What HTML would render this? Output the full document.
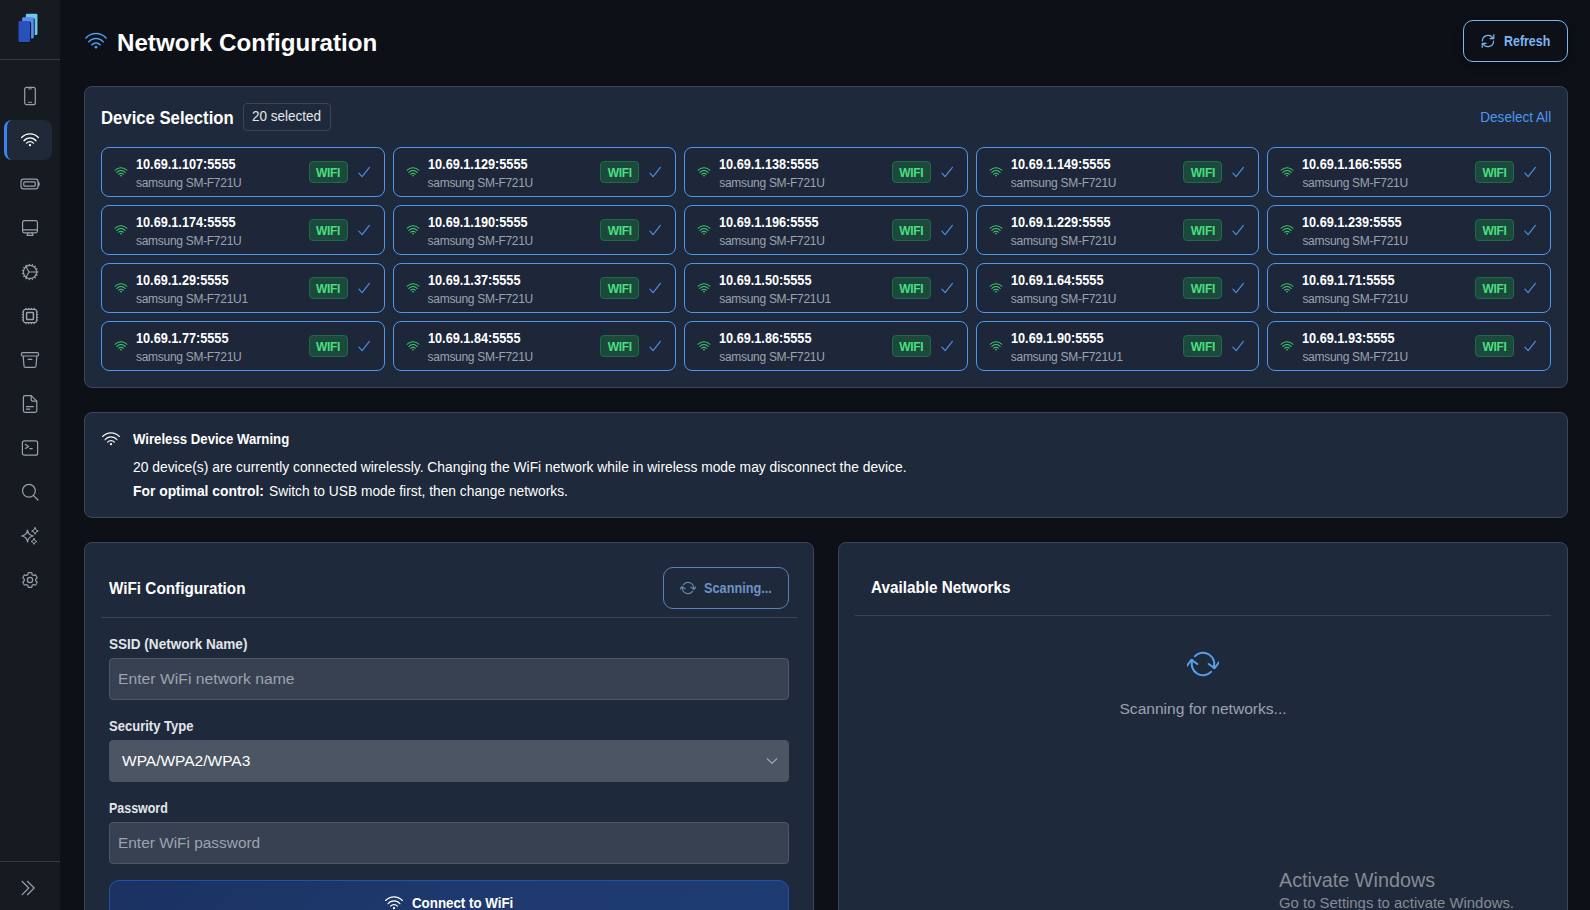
<!DOCTYPE html>
<html lang="en">
<head>
<meta charset="utf-8">
<title>Network Configuration</title>
<style>
*{box-sizing:border-box;margin:0;padding:0}
html,body{width:1590px;height:910px;overflow:hidden}
body{background:#0d1117;color:#fff;font-family:"Liberation Sans",sans-serif;position:relative}
.abs{position:absolute}
.t{position:absolute;white-space:nowrap;line-height:1}
b,.b{font-weight:700}
/* sidebar */
.sb{position:absolute;left:0;top:0;width:60px;height:910px;background:#161b22}
.sb .dv{position:absolute;left:0;width:60px;height:1px;background:#333a46}
.nv{position:absolute;left:4px;width:48px;height:40px;border-radius:8px;display:flex;align-items:center;justify-content:center;padding-left:4px}
.nv.act{background:#1f2937;border-left:3px solid #3b82f6;padding-left:1px}
/* panels */
.pn{position:absolute;background:#1e293b;border:1px solid #3a465a;border-radius:8px}
.grid{position:absolute;left:16px;top:60px;width:1450px;display:grid;grid-template-columns:repeat(5,1fr);gap:8px}
.card{height:50px;border:1px solid #4e97ee;border-radius:8px;background:#1d2739;display:flex;align-items:center;padding:0 12px}
.card .cw{flex:none;margin-right:8px}
.ct{flex:1;min-width:0;position:relative;top:1px}
.ip{font-weight:700;font-size:14px;line-height:16px;transform:scaleX(.907);transform-origin:0 50%;color:#fff;white-space:nowrap;margin-top:0}
.md{font-size:12px;line-height:14px;color:#9ca3af;white-space:nowrap;margin-top:4px;letter-spacing:-.29px}
.wb{flex:none;width:39px;height:22px;border:1px solid #1f6b48;background:#1b4a3d;border-radius:4px;color:#4ade80;font-weight:700;font-size:12px;line-height:20px;padding-top:1px;text-align:center;letter-spacing:-.3px;margin-right:8px}
.ck{flex:none}
.hl{position:absolute;height:1px;background:#374357}
.inp{position:absolute;left:24px;width:680px;height:42px;border-radius:4px;background:#374151;border:1px solid #4d5768;color:#9ca3af;font-size:15.5px;line-height:40px;padding-left:8.4px;white-space:nowrap}
.sel{background:#4b5563;border-color:#4b5563;color:#fff;padding-left:12px}
.lb{position:absolute;left:24px;font-weight:700;font-size:14px;line-height:20px;color:#e2e5ea;white-space:nowrap}
.btn{position:absolute;border-radius:10px;display:flex;align-items:center;font-weight:700;font-size:14px;white-space:nowrap}
.ti{position:absolute;left:84px;top:29px}
.wi{position:absolute;left:16px;top:16px}
.bs{position:absolute;left:348px;top:105px}
.ri,.si,.bi{flex:none}
.ib{display:inline-block}
#t5{transform-origin:100% 50% !important}
#t22{transform-origin:50% 50% !important}
#t1{transform:scaleX(1.0060);transform-origin:0 50%}
#t2{transform:scaleX(0.8880);transform-origin:0 50%}
#t3{transform:scaleX(0.9275);transform-origin:0 50%}
#t4{transform:scaleX(0.9650);transform-origin:0 50%}
#t5{transform:scaleX(0.9692);transform-origin:0 50%}
#t9{transform:scaleX(0.9417);transform-origin:0 50%}
#t10{transform:scaleX(0.9885);transform-origin:0 50%}
#t11b{transform:scaleX(0.9900);transform-origin:0 50%}
#t11r{transform:scaleX(0.9849);transform-origin:0 50%}
#t12{transform:scaleX(0.9672);transform-origin:0 50%}
#t13{transform:scaleX(0.9091);transform-origin:0 50%}
#t14{transform:scaleX(0.9668);transform-origin:0 50%}
#t15{transform:scaleX(1.0149);transform-origin:0 50%}
#t16{transform:scaleX(0.9308);transform-origin:0 50%}
#t17{transform:scaleX(0.9998);transform-origin:0 50%}
#t18{transform:scaleX(0.8890);transform-origin:0 50%}
#t19{transform:scaleX(0.9945);transform-origin:0 50%}
#t20{transform:scaleX(0.9519);transform-origin:0 50%}
#t21{transform:scaleX(0.9669);transform-origin:0 50%}
#t22{transform:scaleX(1.0049);transform-origin:0 50%}
#t23{transform:scaleX(0.9649);transform-origin:0 50%}
#t24{transform:scaleX(1.0267);transform-origin:0 50%}
</style>
</head>
<body>
<aside class="sb">
  <svg class="abs" style="left:0;top:0" width="60" height="59" viewBox="0 0 60 59">
    <rect x="26.6" y="14.6" width="11.8" height="21.2" rx="1.2" fill="#10141b"/>
    <rect x="25.8" y="13.7" width="11.7" height="21.2" rx="1.2" fill="#6fc6ea"/>
    <rect x="22.9" y="18.2" width="11.8" height="21.2" rx="1.2" fill="#10141b"/>
    <rect x="22.1" y="17.3" width="11.7" height="21.1" rx="1.2" fill="#5a8cf0"/>
    <rect x="19.3" y="21.8" width="11.8" height="21.2" rx="1.2" fill="#10141b"/>
    <rect x="18.5" y="20.9" width="11.7" height="21.1" rx="1.2" fill="#2851b9"/>
  </svg>
  <div class="dv" style="top:59px"></div>
  <div class="nv" style="top:76px"><svg width="20" height="20" viewBox="0 0 20 20" stroke="#9aa1ac" stroke-width="1.2" fill="none" stroke-linecap="round" stroke-linejoin="round"><rect x="4.7" y="1.3" width="10.6" height="17.4" rx="2"/><line x1="8.6" y1="2.9" x2="11.4" y2="2.9" stroke-width="1"/><line x1="8.4" y1="16.3" x2="11.6" y2="16.3" stroke-width="1"/></svg></div>
<div class="nv act" style="top:120px"><svg class="" style="" width="20" height="20" viewBox="0 0 20 20" fill="none"><path d="M1.60 7.50A11.40 11.40 0 0 1 18.40 7.50M4.00 10.74A7.66 7.66 0 0 1 16.00 10.74M6.56 13.19A4.70 4.70 0 0 1 13.44 13.19" stroke="#ffffff" stroke-width="1.25" stroke-linecap="round"/><circle cx="10" cy="15.2" r="1.15" fill="#ffffff"/></svg></div>
<div class="nv" style="top:164px"><svg width="20" height="20" viewBox="0 0 20 20" stroke="#9aa1ac" stroke-width="1.2" fill="none" stroke-linecap="round" stroke-linejoin="round"><rect x="1" y="5.2" width="17" height="9.6" rx="2.4"/><rect x="3.8" y="7.8" width="11.4" height="4.4" rx="0.8"/><path d="M18.6 8.4Q19.6 10 18.6 11.6" stroke-width="1.4"/></svg></div>
<div class="nv" style="top:208px"><svg width="20" height="20" viewBox="0 0 20 20" stroke="#9aa1ac" stroke-width="1.2" fill="none" stroke-linecap="round" stroke-linejoin="round"><rect x="2.6" y="2.6" width="14.8" height="12.2" rx="1.8"/><line x1="2.8" y1="11.9" x2="17.2" y2="11.9"/><path d="M8 14.9 7 17.4H13L12 14.9"/></svg></div>
<div class="nv" style="top:252px"><svg width="20" height="20" viewBox="0 0 20 20" stroke="#9aa1ac" stroke-width="1.2" fill="none" stroke-linecap="round" stroke-linejoin="round"><circle cx="10" cy="10" r="6.6"/><line x1="17.10" y1="10.00" x2="17.70" y2="10.00" stroke-width="1.3"/><line x1="16.49" y1="12.89" x2="17.03" y2="13.13" stroke-width="1.3"/><line x1="14.75" y1="15.28" x2="15.15" y2="15.72" stroke-width="1.3"/><line x1="12.19" y1="16.75" x2="12.38" y2="17.32" stroke-width="1.3"/><line x1="9.26" y1="17.06" x2="9.20" y2="17.66" stroke-width="1.3"/><line x1="6.45" y1="16.15" x2="6.15" y2="16.67" stroke-width="1.3"/><line x1="4.26" y1="14.17" x2="3.77" y2="14.53" stroke-width="1.3"/><line x1="3.06" y1="11.48" x2="2.47" y2="11.60" stroke-width="1.3"/><line x1="3.06" y1="8.52" x2="2.47" y2="8.40" stroke-width="1.3"/><line x1="4.26" y1="5.83" x2="3.77" y2="5.47" stroke-width="1.3"/><line x1="6.45" y1="3.85" x2="6.15" y2="3.33" stroke-width="1.3"/><line x1="9.26" y1="2.94" x2="9.20" y2="2.34" stroke-width="1.3"/><line x1="12.19" y1="3.25" x2="12.38" y2="2.68" stroke-width="1.3"/><line x1="14.75" y1="4.72" x2="15.15" y2="4.28" stroke-width="1.3"/><line x1="16.49" y1="7.11" x2="17.03" y2="6.87" stroke-width="1.3"/><path d="M9 10H16.6M9 10 5.7 4.2M9 10 5.7 15.8"/></svg></div>
<div class="nv" style="top:296px"><svg width="20" height="20" viewBox="0 0 20 20" stroke="#9aa1ac" stroke-width="1.2" fill="none" stroke-linecap="round" stroke-linejoin="round"><rect x="3.3" y="3.3" width="13.4" height="13.4" rx="2.4"/><line x1="6" y1="2.3" x2="6" y2="3.2"/><line x1="6" y1="16.8" x2="6" y2="17.7"/><line x1="2.3" y1="6" x2="3.2" y2="6"/><line x1="16.8" y1="6" x2="17.7" y2="6"/><line x1="8.7" y1="2.3" x2="8.7" y2="3.2"/><line x1="8.7" y1="16.8" x2="8.7" y2="17.7"/><line x1="2.3" y1="8.7" x2="3.2" y2="8.7"/><line x1="16.8" y1="8.7" x2="17.7" y2="8.7"/><line x1="11.3" y1="2.3" x2="11.3" y2="3.2"/><line x1="11.3" y1="16.8" x2="11.3" y2="17.7"/><line x1="2.3" y1="11.3" x2="3.2" y2="11.3"/><line x1="16.8" y1="11.3" x2="17.7" y2="11.3"/><line x1="14" y1="2.3" x2="14" y2="3.2"/><line x1="14" y1="16.8" x2="14" y2="17.7"/><line x1="2.3" y1="14" x2="3.2" y2="14"/><line x1="16.8" y1="14" x2="17.7" y2="14"/><rect x="6.6" y="6.6" width="6.8" height="6.8" rx="0.5" stroke-width="1.5"/></svg></div>
<div class="nv" style="top:340px"><svg width="20" height="20" viewBox="0 0 20 20" stroke="#9aa1ac" stroke-width="1.2" fill="none" stroke-linecap="round" stroke-linejoin="round"><rect x="1.5" y="2.6" width="17" height="3.4" rx="1.1"/><path d="M3.2 6.2 4 16Q4.1 17.4 5.6 17.4H14.4Q15.9 17.4 16 16L16.8 6.2"/><line x1="8.2" y1="9.4" x2="11.8" y2="9.4"/></svg></div>
<div class="nv" style="top:384px"><svg width="20" height="20" viewBox="0 0 20 20" stroke="#9aa1ac" stroke-width="1.2" fill="none" stroke-linecap="round" stroke-linejoin="round"><path d="M5.2 1.6H11.2L16.8 7.2V16.6Q16.8 18.4 15 18.4H5.2Q3.4 18.4 3.4 16.6V3.4Q3.4 1.6 5.2 1.6Z"/><path d="M11.2 1.8V5.6Q11.2 7.2 12.8 7.2H16.6"/><line x1="6.4" y1="12.6" x2="13.4" y2="12.6"/><line x1="6.4" y1="15.2" x2="9.8" y2="15.2"/></svg></div>
<div class="nv" style="top:428px"><svg width="20" height="20" viewBox="0 0 20 20" stroke="#9aa1ac" stroke-width="1.2" fill="none" stroke-linecap="round" stroke-linejoin="round"><rect x="2.4" y="2.8" width="15.2" height="14.4" rx="2"/><path d="M5.4 6.4 8.6 8.4 5.4 10.4"/><line x1="9.8" y1="10.6" x2="12.2" y2="10.6"/></svg></div>
<div class="nv" style="top:472px"><svg width="20" height="20" viewBox="0 0 20 20" stroke="#9aa1ac" stroke-width="1.2" fill="none" stroke-linecap="round" stroke-linejoin="round"><circle cx="8.9" cy="8.8" r="6.4"/><line x1="13.6" y1="13.6" x2="18" y2="18"/></svg></div>
<div class="nv" style="top:516px"><svg width="20" height="20" viewBox="0 0 20 20" stroke="#9aa1ac" stroke-width="1.2" fill="none" stroke-linecap="round" stroke-linejoin="round"><path d="M7.5 4.2Q8.25 9.25 13.3 10Q8.25 10.75 7.5 15.8Q6.75 10.75 1.7000000000000002 10Q6.75 9.25 7.5 4.2Z"/><path d="M15 1.7000000000000002Q15.43 4.57 18.3 5Q15.43 5.43 15 8.3Q14.57 5.43 11.7 5Q14.57 4.57 15 1.7000000000000002Z" stroke-width="1"/><path d="M14 12.6Q14.38 15.12 16.9 15.5Q14.38 15.88 14 18.4Q13.62 15.88 11.1 15.5Q13.62 15.12 14 12.6Z" stroke-width="1"/></svg></div>
<div class="nv" style="top:560px"><svg width="20" height="20" viewBox="0 0 20 20" stroke="#9aa1ac" stroke-width="1.2" fill="none" stroke-linecap="round" stroke-linejoin="round"><path d="M10.00 2.55L10.32 2.56L10.65 2.58L10.97 2.62L11.29 2.67L11.60 2.77L11.87 3.03L12.01 3.64L12.07 4.32L12.21 4.67L12.41 4.84L12.62 4.97L12.84 5.09L13.05 5.21L13.27 5.33L13.51 5.42L13.88 5.37L14.50 5.08L15.11 4.89L15.46 5.00L15.70 5.22L15.91 5.47L16.10 5.73L16.28 6.00L16.45 6.28L16.61 6.56L16.75 6.85L16.88 7.15L16.99 7.46L17.06 7.77L16.97 8.13L16.51 8.56L15.95 8.95L15.72 9.25L15.68 9.50L15.67 9.75L15.67 10.00L15.67 10.25L15.68 10.50L15.72 10.75L15.95 11.05L16.51 11.44L16.97 11.87L17.06 12.23L16.99 12.54L16.88 12.85L16.75 13.15L16.61 13.44L16.45 13.72L16.28 14.00L16.10 14.27L15.91 14.53L15.70 14.78L15.46 15.00L15.11 15.11L14.50 14.92L13.88 14.63L13.51 14.58L13.27 14.67L13.05 14.79L12.84 14.91L12.62 15.03L12.41 15.16L12.21 15.33L12.07 15.68L12.01 16.36L11.87 16.97L11.60 17.23L11.29 17.33L10.97 17.38L10.65 17.42L10.32 17.44L10.00 17.45L9.68 17.44L9.35 17.42L9.03 17.38L8.71 17.33L8.40 17.23L8.13 16.97L7.99 16.36L7.93 15.68L7.79 15.33L7.59 15.16L7.38 15.03L7.16 14.91L6.95 14.79L6.73 14.67L6.49 14.58L6.12 14.63L5.50 14.92L4.89 15.11L4.54 15.00L4.30 14.78L4.09 14.53L3.90 14.27L3.72 14.00L3.55 13.72L3.39 13.44L3.25 13.15L3.12 12.85L3.01 12.54L2.94 12.23L3.03 11.87L3.49 11.44L4.05 11.05L4.28 10.75L4.32 10.50L4.33 10.25L4.33 10.00L4.33 9.75L4.32 9.50L4.28 9.25L4.05 8.95L3.49 8.56L3.03 8.13L2.94 7.77L3.01 7.46L3.12 7.15L3.25 6.85L3.39 6.56L3.55 6.28L3.72 6.00L3.90 5.73L4.09 5.47L4.30 5.22L4.54 5.00L4.89 4.89L5.50 5.08L6.12 5.37L6.49 5.42L6.73 5.33L6.95 5.21L7.16 5.09L7.38 4.97L7.59 4.84L7.79 4.67L7.93 4.32L7.99 3.64L8.13 3.03L8.40 2.77L8.71 2.67L9.03 2.62L9.35 2.58L9.68 2.56Z"/><circle cx="10" cy="10" r="2.6"/></svg></div>
  <div class="dv" style="top:861px"></div>
  <svg class="abs" style="left:18px;top:878px" width="20" height="20" viewBox="0 0 20 20" fill="none" stroke="#9aa1ac" stroke-width="1.2" stroke-linecap="square"><path d="M4.2 3.4 10.8 10 4.2 16.6M9.6 3.4 16.2 10 9.6 16.6"/></svg>
</aside>

<main>
  <svg class="ti" style="" width="24" height="24" viewBox="0 0 20 20" fill="none"><path d="M1.60 7.50A11.40 11.40 0 0 1 18.40 7.50M4.00 10.74A7.66 7.66 0 0 1 16.00 10.74M6.56 13.19A4.70 4.70 0 0 1 13.44 13.19" stroke="#4d9bea" stroke-width="1.3" stroke-linecap="round"/><circle cx="10" cy="15.2" r="1.15" fill="#4d9bea"/></svg>
  <h1 class="t" id="t1" style="left:117px;top:31px;font-size:24px;font-weight:700">Network Configuration</h1>
  <div class="btn" id="refresh" style="left:1463px;top:20px;width:105px;height:42px;border:1px solid #7db5f2;color:#7db5f2;padding-left:16px;box-shadow:0 4px 10px rgba(0,0,0,.35)"><svg class="ri" style="" width="16" height="16" viewBox="0 0 16 16" fill="none"><g transform="rotate(0 8 8)"><path d="M2.4 8A5.6 5.6 0 0 1 12.9 5.3M13.8 1.7V5.6H9.9M13.6 8A5.6 5.6 0 0 1 3.1 10.7M2.2 14.3V10.4H6.1" stroke="#7db5f2" stroke-width="1.2" stroke-linecap="round" stroke-linejoin="round"/></g></svg><span id="t2" style="margin-left:8px">Refresh</span></div>

  <section class="pn" style="left:84px;top:86px;width:1484px;height:302px">
    <h2 class="t" id="t3" style="left:16px;top:22px;font-size:18px;font-weight:700">Device Selection</h2>
    <div class="abs" style="left:158px;top:16px;width:88px;height:28px;border:1px solid #3b4656;border-radius:4px"></div>
    <span class="t" id="t4" style="left:167px;top:22px;font-size:14px;color:#e5e7eb">20 selected</span>
    <span class="t" id="t5" style="right:16px;top:23px;font-size:14px;color:#4d97f0">Deselect All</span>
    <div class="grid">
<div class="card"><svg class="cw" style="" width="14" height="14" viewBox="0 0 20 20" fill="none"><path d="M1.60 7.50A11.40 11.40 0 0 1 18.40 7.50M4.00 10.74A7.66 7.66 0 0 1 16.00 10.74M6.56 13.19A4.70 4.70 0 0 1 13.44 13.19" stroke="#3fcf6e" stroke-width="1.5" stroke-linecap="round"/><circle cx="10" cy="15.2" r="1.15" fill="#3fcf6e"/></svg><div class="ct"><div class="ip">10.69.1.107:5555</div><div class="md">samsung SM-F721U</div></div><span class="wb">WIFI</span><svg class="ck" width="16" height="16" viewBox="0 0 16 16" fill="none"><path d="M2.9 9.2 6.1 12.6 13.4 3.4" stroke="#4a90e2" stroke-width="1.15" stroke-linecap="round" stroke-linejoin="round"/></svg></div>
<div class="card"><svg class="cw" style="" width="14" height="14" viewBox="0 0 20 20" fill="none"><path d="M1.60 7.50A11.40 11.40 0 0 1 18.40 7.50M4.00 10.74A7.66 7.66 0 0 1 16.00 10.74M6.56 13.19A4.70 4.70 0 0 1 13.44 13.19" stroke="#3fcf6e" stroke-width="1.5" stroke-linecap="round"/><circle cx="10" cy="15.2" r="1.15" fill="#3fcf6e"/></svg><div class="ct"><div class="ip">10.69.1.129:5555</div><div class="md">samsung SM-F721U</div></div><span class="wb">WIFI</span><svg class="ck" width="16" height="16" viewBox="0 0 16 16" fill="none"><path d="M2.9 9.2 6.1 12.6 13.4 3.4" stroke="#4a90e2" stroke-width="1.15" stroke-linecap="round" stroke-linejoin="round"/></svg></div>
<div class="card"><svg class="cw" style="" width="14" height="14" viewBox="0 0 20 20" fill="none"><path d="M1.60 7.50A11.40 11.40 0 0 1 18.40 7.50M4.00 10.74A7.66 7.66 0 0 1 16.00 10.74M6.56 13.19A4.70 4.70 0 0 1 13.44 13.19" stroke="#3fcf6e" stroke-width="1.5" stroke-linecap="round"/><circle cx="10" cy="15.2" r="1.15" fill="#3fcf6e"/></svg><div class="ct"><div class="ip">10.69.1.138:5555</div><div class="md">samsung SM-F721U</div></div><span class="wb">WIFI</span><svg class="ck" width="16" height="16" viewBox="0 0 16 16" fill="none"><path d="M2.9 9.2 6.1 12.6 13.4 3.4" stroke="#4a90e2" stroke-width="1.15" stroke-linecap="round" stroke-linejoin="round"/></svg></div>
<div class="card"><svg class="cw" style="" width="14" height="14" viewBox="0 0 20 20" fill="none"><path d="M1.60 7.50A11.40 11.40 0 0 1 18.40 7.50M4.00 10.74A7.66 7.66 0 0 1 16.00 10.74M6.56 13.19A4.70 4.70 0 0 1 13.44 13.19" stroke="#3fcf6e" stroke-width="1.5" stroke-linecap="round"/><circle cx="10" cy="15.2" r="1.15" fill="#3fcf6e"/></svg><div class="ct"><div class="ip">10.69.1.149:5555</div><div class="md">samsung SM-F721U</div></div><span class="wb">WIFI</span><svg class="ck" width="16" height="16" viewBox="0 0 16 16" fill="none"><path d="M2.9 9.2 6.1 12.6 13.4 3.4" stroke="#4a90e2" stroke-width="1.15" stroke-linecap="round" stroke-linejoin="round"/></svg></div>
<div class="card"><svg class="cw" style="" width="14" height="14" viewBox="0 0 20 20" fill="none"><path d="M1.60 7.50A11.40 11.40 0 0 1 18.40 7.50M4.00 10.74A7.66 7.66 0 0 1 16.00 10.74M6.56 13.19A4.70 4.70 0 0 1 13.44 13.19" stroke="#3fcf6e" stroke-width="1.5" stroke-linecap="round"/><circle cx="10" cy="15.2" r="1.15" fill="#3fcf6e"/></svg><div class="ct"><div class="ip">10.69.1.166:5555</div><div class="md">samsung SM-F721U</div></div><span class="wb">WIFI</span><svg class="ck" width="16" height="16" viewBox="0 0 16 16" fill="none"><path d="M2.9 9.2 6.1 12.6 13.4 3.4" stroke="#4a90e2" stroke-width="1.15" stroke-linecap="round" stroke-linejoin="round"/></svg></div>
<div class="card"><svg class="cw" style="" width="14" height="14" viewBox="0 0 20 20" fill="none"><path d="M1.60 7.50A11.40 11.40 0 0 1 18.40 7.50M4.00 10.74A7.66 7.66 0 0 1 16.00 10.74M6.56 13.19A4.70 4.70 0 0 1 13.44 13.19" stroke="#3fcf6e" stroke-width="1.5" stroke-linecap="round"/><circle cx="10" cy="15.2" r="1.15" fill="#3fcf6e"/></svg><div class="ct"><div class="ip">10.69.1.174:5555</div><div class="md">samsung SM-F721U</div></div><span class="wb">WIFI</span><svg class="ck" width="16" height="16" viewBox="0 0 16 16" fill="none"><path d="M2.9 9.2 6.1 12.6 13.4 3.4" stroke="#4a90e2" stroke-width="1.15" stroke-linecap="round" stroke-linejoin="round"/></svg></div>
<div class="card"><svg class="cw" style="" width="14" height="14" viewBox="0 0 20 20" fill="none"><path d="M1.60 7.50A11.40 11.40 0 0 1 18.40 7.50M4.00 10.74A7.66 7.66 0 0 1 16.00 10.74M6.56 13.19A4.70 4.70 0 0 1 13.44 13.19" stroke="#3fcf6e" stroke-width="1.5" stroke-linecap="round"/><circle cx="10" cy="15.2" r="1.15" fill="#3fcf6e"/></svg><div class="ct"><div class="ip">10.69.1.190:5555</div><div class="md">samsung SM-F721U</div></div><span class="wb">WIFI</span><svg class="ck" width="16" height="16" viewBox="0 0 16 16" fill="none"><path d="M2.9 9.2 6.1 12.6 13.4 3.4" stroke="#4a90e2" stroke-width="1.15" stroke-linecap="round" stroke-linejoin="round"/></svg></div>
<div class="card"><svg class="cw" style="" width="14" height="14" viewBox="0 0 20 20" fill="none"><path d="M1.60 7.50A11.40 11.40 0 0 1 18.40 7.50M4.00 10.74A7.66 7.66 0 0 1 16.00 10.74M6.56 13.19A4.70 4.70 0 0 1 13.44 13.19" stroke="#3fcf6e" stroke-width="1.5" stroke-linecap="round"/><circle cx="10" cy="15.2" r="1.15" fill="#3fcf6e"/></svg><div class="ct"><div class="ip">10.69.1.196:5555</div><div class="md">samsung SM-F721U</div></div><span class="wb">WIFI</span><svg class="ck" width="16" height="16" viewBox="0 0 16 16" fill="none"><path d="M2.9 9.2 6.1 12.6 13.4 3.4" stroke="#4a90e2" stroke-width="1.15" stroke-linecap="round" stroke-linejoin="round"/></svg></div>
<div class="card"><svg class="cw" style="" width="14" height="14" viewBox="0 0 20 20" fill="none"><path d="M1.60 7.50A11.40 11.40 0 0 1 18.40 7.50M4.00 10.74A7.66 7.66 0 0 1 16.00 10.74M6.56 13.19A4.70 4.70 0 0 1 13.44 13.19" stroke="#3fcf6e" stroke-width="1.5" stroke-linecap="round"/><circle cx="10" cy="15.2" r="1.15" fill="#3fcf6e"/></svg><div class="ct"><div class="ip">10.69.1.229:5555</div><div class="md">samsung SM-F721U</div></div><span class="wb">WIFI</span><svg class="ck" width="16" height="16" viewBox="0 0 16 16" fill="none"><path d="M2.9 9.2 6.1 12.6 13.4 3.4" stroke="#4a90e2" stroke-width="1.15" stroke-linecap="round" stroke-linejoin="round"/></svg></div>
<div class="card"><svg class="cw" style="" width="14" height="14" viewBox="0 0 20 20" fill="none"><path d="M1.60 7.50A11.40 11.40 0 0 1 18.40 7.50M4.00 10.74A7.66 7.66 0 0 1 16.00 10.74M6.56 13.19A4.70 4.70 0 0 1 13.44 13.19" stroke="#3fcf6e" stroke-width="1.5" stroke-linecap="round"/><circle cx="10" cy="15.2" r="1.15" fill="#3fcf6e"/></svg><div class="ct"><div class="ip">10.69.1.239:5555</div><div class="md">samsung SM-F721U</div></div><span class="wb">WIFI</span><svg class="ck" width="16" height="16" viewBox="0 0 16 16" fill="none"><path d="M2.9 9.2 6.1 12.6 13.4 3.4" stroke="#4a90e2" stroke-width="1.15" stroke-linecap="round" stroke-linejoin="round"/></svg></div>
<div class="card"><svg class="cw" style="" width="14" height="14" viewBox="0 0 20 20" fill="none"><path d="M1.60 7.50A11.40 11.40 0 0 1 18.40 7.50M4.00 10.74A7.66 7.66 0 0 1 16.00 10.74M6.56 13.19A4.70 4.70 0 0 1 13.44 13.19" stroke="#3fcf6e" stroke-width="1.5" stroke-linecap="round"/><circle cx="10" cy="15.2" r="1.15" fill="#3fcf6e"/></svg><div class="ct"><div class="ip">10.69.1.29:5555</div><div class="md">samsung SM-F721U1</div></div><span class="wb">WIFI</span><svg class="ck" width="16" height="16" viewBox="0 0 16 16" fill="none"><path d="M2.9 9.2 6.1 12.6 13.4 3.4" stroke="#4a90e2" stroke-width="1.15" stroke-linecap="round" stroke-linejoin="round"/></svg></div>
<div class="card"><svg class="cw" style="" width="14" height="14" viewBox="0 0 20 20" fill="none"><path d="M1.60 7.50A11.40 11.40 0 0 1 18.40 7.50M4.00 10.74A7.66 7.66 0 0 1 16.00 10.74M6.56 13.19A4.70 4.70 0 0 1 13.44 13.19" stroke="#3fcf6e" stroke-width="1.5" stroke-linecap="round"/><circle cx="10" cy="15.2" r="1.15" fill="#3fcf6e"/></svg><div class="ct"><div class="ip">10.69.1.37:5555</div><div class="md">samsung SM-F721U</div></div><span class="wb">WIFI</span><svg class="ck" width="16" height="16" viewBox="0 0 16 16" fill="none"><path d="M2.9 9.2 6.1 12.6 13.4 3.4" stroke="#4a90e2" stroke-width="1.15" stroke-linecap="round" stroke-linejoin="round"/></svg></div>
<div class="card"><svg class="cw" style="" width="14" height="14" viewBox="0 0 20 20" fill="none"><path d="M1.60 7.50A11.40 11.40 0 0 1 18.40 7.50M4.00 10.74A7.66 7.66 0 0 1 16.00 10.74M6.56 13.19A4.70 4.70 0 0 1 13.44 13.19" stroke="#3fcf6e" stroke-width="1.5" stroke-linecap="round"/><circle cx="10" cy="15.2" r="1.15" fill="#3fcf6e"/></svg><div class="ct"><div class="ip">10.69.1.50:5555</div><div class="md">samsung SM-F721U1</div></div><span class="wb">WIFI</span><svg class="ck" width="16" height="16" viewBox="0 0 16 16" fill="none"><path d="M2.9 9.2 6.1 12.6 13.4 3.4" stroke="#4a90e2" stroke-width="1.15" stroke-linecap="round" stroke-linejoin="round"/></svg></div>
<div class="card"><svg class="cw" style="" width="14" height="14" viewBox="0 0 20 20" fill="none"><path d="M1.60 7.50A11.40 11.40 0 0 1 18.40 7.50M4.00 10.74A7.66 7.66 0 0 1 16.00 10.74M6.56 13.19A4.70 4.70 0 0 1 13.44 13.19" stroke="#3fcf6e" stroke-width="1.5" stroke-linecap="round"/><circle cx="10" cy="15.2" r="1.15" fill="#3fcf6e"/></svg><div class="ct"><div class="ip">10.69.1.64:5555</div><div class="md">samsung SM-F721U</div></div><span class="wb">WIFI</span><svg class="ck" width="16" height="16" viewBox="0 0 16 16" fill="none"><path d="M2.9 9.2 6.1 12.6 13.4 3.4" stroke="#4a90e2" stroke-width="1.15" stroke-linecap="round" stroke-linejoin="round"/></svg></div>
<div class="card"><svg class="cw" style="" width="14" height="14" viewBox="0 0 20 20" fill="none"><path d="M1.60 7.50A11.40 11.40 0 0 1 18.40 7.50M4.00 10.74A7.66 7.66 0 0 1 16.00 10.74M6.56 13.19A4.70 4.70 0 0 1 13.44 13.19" stroke="#3fcf6e" stroke-width="1.5" stroke-linecap="round"/><circle cx="10" cy="15.2" r="1.15" fill="#3fcf6e"/></svg><div class="ct"><div class="ip">10.69.1.71:5555</div><div class="md">samsung SM-F721U</div></div><span class="wb">WIFI</span><svg class="ck" width="16" height="16" viewBox="0 0 16 16" fill="none"><path d="M2.9 9.2 6.1 12.6 13.4 3.4" stroke="#4a90e2" stroke-width="1.15" stroke-linecap="round" stroke-linejoin="round"/></svg></div>
<div class="card"><svg class="cw" style="" width="14" height="14" viewBox="0 0 20 20" fill="none"><path d="M1.60 7.50A11.40 11.40 0 0 1 18.40 7.50M4.00 10.74A7.66 7.66 0 0 1 16.00 10.74M6.56 13.19A4.70 4.70 0 0 1 13.44 13.19" stroke="#3fcf6e" stroke-width="1.5" stroke-linecap="round"/><circle cx="10" cy="15.2" r="1.15" fill="#3fcf6e"/></svg><div class="ct"><div class="ip">10.69.1.77:5555</div><div class="md">samsung SM-F721U</div></div><span class="wb">WIFI</span><svg class="ck" width="16" height="16" viewBox="0 0 16 16" fill="none"><path d="M2.9 9.2 6.1 12.6 13.4 3.4" stroke="#4a90e2" stroke-width="1.15" stroke-linecap="round" stroke-linejoin="round"/></svg></div>
<div class="card"><svg class="cw" style="" width="14" height="14" viewBox="0 0 20 20" fill="none"><path d="M1.60 7.50A11.40 11.40 0 0 1 18.40 7.50M4.00 10.74A7.66 7.66 0 0 1 16.00 10.74M6.56 13.19A4.70 4.70 0 0 1 13.44 13.19" stroke="#3fcf6e" stroke-width="1.5" stroke-linecap="round"/><circle cx="10" cy="15.2" r="1.15" fill="#3fcf6e"/></svg><div class="ct"><div class="ip">10.69.1.84:5555</div><div class="md">samsung SM-F721U</div></div><span class="wb">WIFI</span><svg class="ck" width="16" height="16" viewBox="0 0 16 16" fill="none"><path d="M2.9 9.2 6.1 12.6 13.4 3.4" stroke="#4a90e2" stroke-width="1.15" stroke-linecap="round" stroke-linejoin="round"/></svg></div>
<div class="card"><svg class="cw" style="" width="14" height="14" viewBox="0 0 20 20" fill="none"><path d="M1.60 7.50A11.40 11.40 0 0 1 18.40 7.50M4.00 10.74A7.66 7.66 0 0 1 16.00 10.74M6.56 13.19A4.70 4.70 0 0 1 13.44 13.19" stroke="#3fcf6e" stroke-width="1.5" stroke-linecap="round"/><circle cx="10" cy="15.2" r="1.15" fill="#3fcf6e"/></svg><div class="ct"><div class="ip">10.69.1.86:5555</div><div class="md">samsung SM-F721U</div></div><span class="wb">WIFI</span><svg class="ck" width="16" height="16" viewBox="0 0 16 16" fill="none"><path d="M2.9 9.2 6.1 12.6 13.4 3.4" stroke="#4a90e2" stroke-width="1.15" stroke-linecap="round" stroke-linejoin="round"/></svg></div>
<div class="card"><svg class="cw" style="" width="14" height="14" viewBox="0 0 20 20" fill="none"><path d="M1.60 7.50A11.40 11.40 0 0 1 18.40 7.50M4.00 10.74A7.66 7.66 0 0 1 16.00 10.74M6.56 13.19A4.70 4.70 0 0 1 13.44 13.19" stroke="#3fcf6e" stroke-width="1.5" stroke-linecap="round"/><circle cx="10" cy="15.2" r="1.15" fill="#3fcf6e"/></svg><div class="ct"><div class="ip">10.69.1.90:5555</div><div class="md">samsung SM-F721U1</div></div><span class="wb">WIFI</span><svg class="ck" width="16" height="16" viewBox="0 0 16 16" fill="none"><path d="M2.9 9.2 6.1 12.6 13.4 3.4" stroke="#4a90e2" stroke-width="1.15" stroke-linecap="round" stroke-linejoin="round"/></svg></div>
<div class="card"><svg class="cw" style="" width="14" height="14" viewBox="0 0 20 20" fill="none"><path d="M1.60 7.50A11.40 11.40 0 0 1 18.40 7.50M4.00 10.74A7.66 7.66 0 0 1 16.00 10.74M6.56 13.19A4.70 4.70 0 0 1 13.44 13.19" stroke="#3fcf6e" stroke-width="1.5" stroke-linecap="round"/><circle cx="10" cy="15.2" r="1.15" fill="#3fcf6e"/></svg><div class="ct"><div class="ip">10.69.1.93:5555</div><div class="md">samsung SM-F721U</div></div><span class="wb">WIFI</span><svg class="ck" width="16" height="16" viewBox="0 0 16 16" fill="none"><path d="M2.9 9.2 6.1 12.6 13.4 3.4" stroke="#4a90e2" stroke-width="1.15" stroke-linecap="round" stroke-linejoin="round"/></svg></div>
    </div>
  </section>

  <section class="pn" style="left:84px;top:412px;width:1484px;height:106px">
    <svg class="wi" style="" width="20" height="20" viewBox="0 0 20 20" fill="none"><path d="M1.60 7.50A11.40 11.40 0 0 1 18.40 7.50M4.00 10.74A7.66 7.66 0 0 1 16.00 10.74M6.56 13.19A4.70 4.70 0 0 1 13.44 13.19" stroke="#f3f4f6" stroke-width="1.15" stroke-linecap="round"/><circle cx="10" cy="15.2" r="1.15" fill="#f3f4f6"/></svg>
    <div class="t b" id="t9" style="left:48px;top:19px;font-size:14px">Wireless Device Warning</div>
    <div class="t" id="t10" style="left:48px;top:47px;font-size:14px">20 device(s) are currently connected wirelessly. Changing the WiFi network while in wireless mode may disconnect the device.</div>
    <div class="t" id="t11" style="left:48px;top:71px;font-size:14px"><b id="t11b" class="ib">For optimal control:</b> <span id="t11r" class="ib">Switch to USB mode first, then change networks.</span></div>
  </section>

  <section class="pn" style="left:84px;top:542px;width:730px;height:400px">
    <h3 class="t" id="t12" style="left:24px;top:38px;font-size:15.8px;font-weight:700">WiFi Configuration</h3>
    <div class="btn" style="left:578px;top:24px;width:126px;height:42px;border:1px solid #5a82b6;color:#6e93c3;padding-left:16px"><svg class="si" style="" width="16" height="16" viewBox="0 0 16 16" fill="none"><g transform="rotate(36 8 8)"><path d="M2.4 8A5.6 5.6 0 0 1 12.9 5.3M13.8 1.7V5.6H9.9M13.6 8A5.6 5.6 0 0 1 3.1 10.7M2.2 14.3V10.4H6.1" stroke="#6186b6" stroke-width="1.2" stroke-linecap="round" stroke-linejoin="round"/></g></svg><span id="t13" style="margin-left:8px">Scanning...</span></div>
    <div class="hl" style="left:16px;top:74px;width:696px"></div>
    <label class="lb" id="t14" style="top:91px">SSID (Network Name)</label>
    <div class="inp" style="top:115px"><span id="t15" class="ib">Enter WiFi network name</span></div>
    <label class="lb" id="t16" style="top:173px">Security Type</label>
    <div class="inp sel" style="top:197px"><span id="t17" class="ib">WPA/WPA2/WPA3</span>
      <svg class="abs" style="right:8px;top:12px" width="16" height="16" viewBox="0 0 16 16" fill="none" stroke="#a1a9b6" stroke-width="1.2" stroke-linecap="round" stroke-linejoin="round"><path d="M3.2 5.8 8 10.4 12.8 5.8"/></svg>
    </div>
    <label class="lb" id="t18" style="top:255px">Password</label>
    <div class="inp" style="top:279px"><span id="t19" class="ib">Enter WiFi password</span></div>
    <div class="btn" style="left:24px;top:337px;width:680px;height:46px;border:1px solid #2451a8;background:linear-gradient(135deg,#1b3262 0%,#1e3a6f 60%,#1f3c72 100%);padding-left:274px;color:#fff"><svg class="bi" style="" width="20" height="20" viewBox="0 0 20 20" fill="none"><path d="M1.60 7.50A11.40 11.40 0 0 1 18.40 7.50M4.00 10.74A7.66 7.66 0 0 1 16.00 10.74M6.56 13.19A4.70 4.70 0 0 1 13.44 13.19" stroke="#ffffff" stroke-width="1.15" stroke-linecap="round"/><circle cx="10" cy="15.2" r="1.15" fill="#ffffff"/></svg><span id="t20" style="margin-left:8px">Connect to WiFi</span></div>
  </section>

  <section class="pn" style="left:838px;top:542px;width:730px;height:400px">
    <h3 class="t" id="t21" style="left:32px;top:37px;font-size:15.8px;font-weight:700">Available Networks</h3>
    <div class="hl" style="left:16px;top:72px;width:696px"></div>
    <svg class="bs" style="" width="32" height="32" viewBox="0 0 16 16" fill="none"><g transform="rotate(36 8 8)"><path d="M2.45 7.2A5.6 5.6 0 0 1 13.4 6.5M13.96 2.3V6.3H10.3M13.55 8.8A5.6 5.6 0 0 1 2.6 9.5M2.04 13.7V9.7H5.7" stroke="#55a0ea" stroke-width="1.0" stroke-linecap="round" stroke-linejoin="round"/></g></svg>
    <div class="t" id="t22" style="left:0;width:728px;text-align:center;top:158px;font-size:15.5px;color:#9ca3af">Scanning for networks...</div>
  </section>

  <div class="t" id="t23" style="left:1279px;top:870px;font-size:20.5px;color:#858b95">Activate Windows</div>
  <div class="t" id="t24" style="left:1279px;top:896px;font-size:14.5px;color:#858b95">Go to Settings to activate Windows.</div>
</main>
</body>
</html>
